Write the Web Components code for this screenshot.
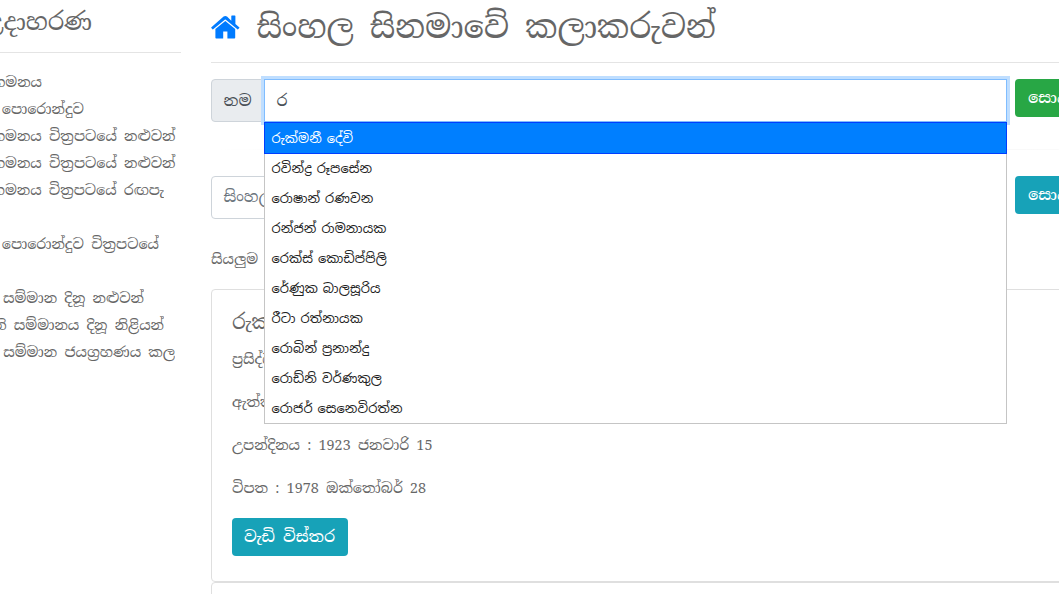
<!DOCTYPE html>
<html lang="si"><head><meta charset="utf-8"><title>සිංහල සිනමාවේ කලාකරුවන්</title>
<style>html{overflow:hidden}body{margin:0;background:#fff;overflow:hidden;color:#666;font:400 14.4px/27px "Noto Serif Sinhala","Noto Serif",serif}</style></head>
<body>
<cinema-app></cinema-app>
<script>
const define = (name, html) => customElements.define(name, class extends HTMLElement {
  constructor() {
    super();
    this.attachShadow({ mode: 'open' }).innerHTML = html;
  }
});

define('example-row', `<style>
:host{display:flex;justify-content:flex-end;overflow:hidden;height:27px;white-space:nowrap}
</style><slot></slot>`);

define('example-list', `<style>
:host{display:block;width:181px;height:594px;overflow:hidden}
header{display:flex;justify-content:flex-end;width:92px;height:52px;line-height:43px;font-size:24px;white-space:nowrap;overflow:hidden}
hr{margin:0 0 16px;border:0;border-top:1px solid #e4e4e4}
</style><header>උදාහරණ</header><hr>
<example-row style="width:42px">ගමනය</example-row>
<example-row style="width:84px">පොරොන්දුව</example-row>
<example-row style="width:175.5px">ගමනය චිත්‍රපටයේ නළුවන්</example-row>
<example-row style="width:175.5px">ගමනය චිත්‍රපටයේ නළුවන්</example-row>
<example-row style="width:164px">ගමනය චිත්‍රපටයේ රඟපැ</example-row>
<example-row></example-row>
<example-row style="width:159px">පොරොන්දුව චිත්‍රපටයේ</example-row>
<example-row></example-row>
<example-row style="width:144px">සම්මාන දිනූ නළුවන්</example-row>
<example-row style="width:164px">නි සම්මානය දිනූ නිළියන්</example-row>
<example-row style="width:175px">සම්මාන ජයග්‍රහණය කල</example-row>`);

define('page-title', `<style>
:host{display:flex;height:62px;border-bottom:1px solid #e4e4e4;font-size:32px;line-height:54px;white-space:nowrap}
svg{width:29px;height:24px;margin:14.5px 16.5px 0 0;flex:none}
</style><svg viewBox="0 0 29 24"><path fill="#007bff" d="M14.3 5.9 4.4 14v8.7q0 .8.8.8h7v-7h4.2v7h7q.8 0 .8-.8V14zM28.2 12.2l-3.8-3.1V1q0-.6-.6-.6h-2.9q-.6 0-.6.6v4.7L16 1.6q-1.7-1.3-3.4 0L.4 12.2q-.4.3-.1.7l1.2 1.3q.3.4.7.1L13.8 4.7q.5-.4 1 0l11.6 9.6q.4.3.7-.1l1.2-1.3q.3-.4-.1-.7z"/></svg><slot></slot>`);

define('action-button', `<style>
:host{display:block;box-sizing:border-box;height:38px;padding:0 var(--inset,13px);border-radius:4px;background:var(--fill,#17a2b8);color:#fff;font-size:16px;font-weight:500;line-height:37px;white-space:nowrap;flex:none}
</style><slot></slot>`);

define('menu-option', `<style>
:host{display:block;box-sizing:border-box;height:30px;padding:0 6.5px;color:#222;font:400 13px/32px "Noto Sans Sinhala","Liberation Sans",sans-serif;letter-spacing:.15px;word-spacing:-1.8px;white-space:nowrap}
:host([active]){height:32px;margin:-1px -1px -1px;padding:0 6.5px;border:1px solid #003eff;background:#007fff;color:#fff;position:relative}
</style><slot></slot>`);

define('suggestion-menu', `<style>
:host{display:block;box-sizing:border-box;height:302px;border:1px solid #c5c5c5;background:#fff}
</style>` + ['රුක්මනී දේවි','රවින්ද්‍ර රූපසේන','රොෂාන් රණවන','රන්ජන් රාමනායක','රෙක්ස් කොඩිප්පිලි','රේණුක බාලසූරිය','රීටා රත්නායක','රොබින් ප්‍රනාන්දු','රොඩ්නි වර්ණකුල','රොජර් සෙනෙවිරත්න'].map((n, i) => `<menu-option${i ? '' : ' active'}>${n}</menu-option>`).join(''));

define('name-search', `<style>
:host{display:flex;height:43px;position:relative}
.label{box-sizing:border-box;width:54px;border:1px solid #ced4da;border-radius:4px 0 0 4px;background:#e9ecef;color:#495057;padding-left:11.5px;font-size:16px;line-height:41px;margin-right:-1px}
.field{box-sizing:border-box;width:743px;border:1px solid #80bdff;background:#fff;color:#495057;padding-left:11.5px;font-size:16px;line-height:41px;box-shadow:0 0 0 3px #bfdeff;margin-right:8px;position:relative}
suggestion-menu{position:absolute;left:53px;top:43px;width:743px;z-index:2}
</style><div class="label">නම</div><div class="field">ර</div><action-button style="--fill:#28a745">සොයන්න</action-button><suggestion-menu></suggestion-menu>`);

define('text-search', `<style>
:host{display:flex;height:43px}
.field{box-sizing:border-box;width:796px;border:1px solid #ced4da;border-radius:4px;color:#6c757d;padding-left:11.5px;font-size:16px;line-height:40px;margin-right:8px}
</style><div class="field">සිංහල</div><action-button>සොයන්න</action-button>`);

define('artist-card', `<style>
:host{display:block;box-sizing:border-box;height:293px;width:900px;border:1px solid #dfdfdf;border-radius:4px;padding:18px 20px}
h5{margin:0 0 10px;font-size:20px;font-weight:inherit;line-height:28px}
p{margin:0 0 16px;line-height:27px}
action-button{width:116px;--inset:12px}
</style><h5>රුක්මනී</h5><p>ප්‍රසිද්ධ</p><p>ඇත්ත</p><p>උපන්දිනය : 1923 ජනවාරි 15</p><p>විපත : 1978 ඔක්තෝබර් 28</p><action-button>වැඩි විස්තර</action-button>`);

define('cinema-app', `<style>
:host{display:flex;gap:30px;width:100%;height:594px;overflow:hidden}
example-list{flex:none}
main{flex:none;width:980px}
name-search{margin-top:16px}
.rule{height:1px;margin:27px 0 26px;background:linear-gradient(90deg,#fff,#eee 50%,#fff)}
.status{margin:27px 0 16px}
.next{height:80px;border:1px solid #dfdfdf;border-radius:4px;width:898px}
</style><example-list></example-list><main>
<page-title>සිංහල සිනමාවේ කලාකරුවන්</page-title>
<name-search></name-search><div class="rule"></div><text-search></text-search>
<div class="status">සියලුම</div>
<artist-card></artist-card><div class="next"></div></main>`);
</script></body></html>
